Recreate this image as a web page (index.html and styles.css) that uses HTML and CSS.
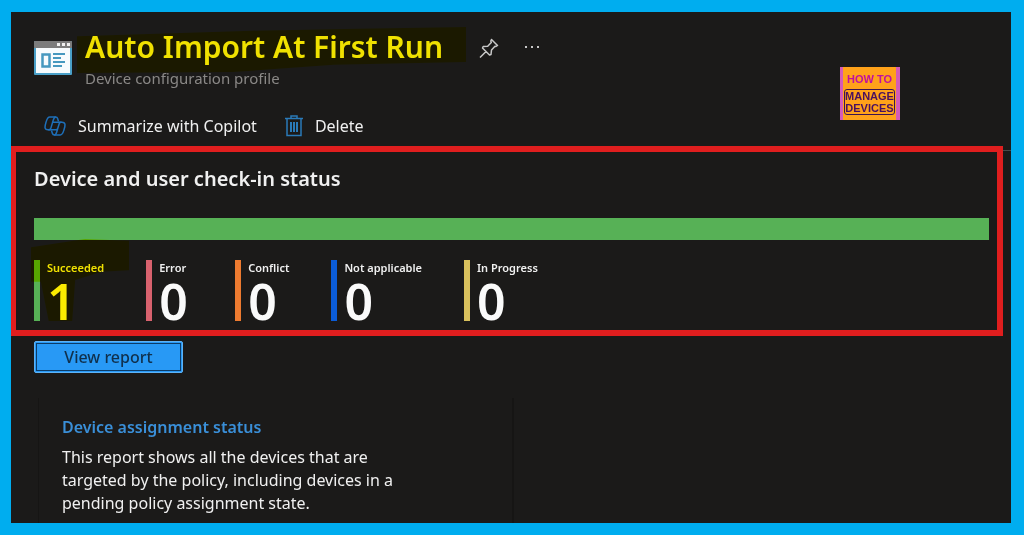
FILE: index.html
```html
<!DOCTYPE html>
<html lang="en">
<head>
  <meta charset="UTF-8">
  <meta name="viewport" content="width=device-width, initial-scale=1.0">
  <title>Auto Import At First Run</title>
  <link rel="stylesheet" href="styles.css">
</head>
<body>
  <header class="header">
    <div class="heading">
      <svg class="profile-icon" viewBox="0 0 38 34" aria-hidden="true">
        <rect width="38" height="34" rx="1" fill="#4aa0c8"/>
        <path d="M0 7V1a1 1 0 0 1 1-1h36a1 1 0 0 1 1 1v6z" fill="#7c7c7c"/>
        <path d="M2 7h34v25H2z" fill="#f7fbfd"/>
        <path d="M23 2h3v3h-3zM28 2h3v3h-3zM33 2h3v3h-3z" fill="#f0f0f0"/>
        <path d="M8.500 13.500h7v12h-7z" fill="none" stroke="#4698bf" stroke-width="2.500"/>
        <path d="M19 13h12M19 17h8M19 21h12M19 25h9" stroke="#4698bf" stroke-width="2"/>
      </svg>
      <div class="names">
        <h1>Auto Import At First Run</h1>
        <p>Device configuration profile</p>
      </div>
      <button class="icon-button" aria-label="Pin">
        <svg width="20" height="20" viewBox="0 0 20 20" fill="none" stroke="#c8c8c8" stroke-width="1.500" stroke-linejoin="round">
          <path d="M12.500 1.500l6 6-1.500 1-1-.2-3.500 3.700-.5 4.500-1.500.5-7-7 .7-1.500 4.500-.3 3.600-3.700-.5-1.500zM7 13.500l-6 6"/>
        </svg>
      </button>
      <button class="icon-button" aria-label="More">
        <svg width="16" height="20" viewBox="0 0 16 20" fill="#c8c8c8">
          <path d="M1 8h2v2H1zM7 8h2v2H7zM13 8h2v2h-2z"/>
        </svg>
      </button>
      <div class="logo">
        <span class="logo-top">HOW TO</span>
        <span class="logo-box">MANAGE<br>DEVICES</span>
      </div>
    </div>
    <nav class="commands">
      <button class="command">
        <svg width="22" height="20" viewBox="0 0 22 20" fill="none" stroke="#1e6fb8" stroke-width="1.500" stroke-linejoin="round">
          <path d="M14.500 5.500l-.8-2.800A2.300 2.300 0 0 0 11.500 1H5.800C3.600 1 2.900 3.200 2.200 5.600 1.300 8.500.8 10 1 11.500c.2 1.700 1.500 2.300 3 2.300h2.500"/>
          <path d="M7.500 14.500l.8 2.800A2.300 2.300 0 0 0 10.500 19h5.700c2.200 0 2.900-2.200 3.600-4.600.9-2.900 1.400-4.400 1.200-5.900-.2-1.700-1.500-2.300-3-2.300h-2.500"/>
          <path d="M11.800 1C10.400 1 9.700 2.600 9.200 4.300l-2.300 7.800c-.4 1.300-1.200 1.700-2.400 1.700H12c1 0 1.500-.6 1.800-1.500l1.400-4.600c.3-1 .9-1.500 2-1.500H10c-1 0-1.400-.5-1.400-.5M10.200 19c1.400 0 2.100-1.600 2.600-3.300l1-3.400"/>
        </svg>
        Summarize with Copilot
      </button>
      <button class="command">
        <svg width="18" height="22" viewBox="0 0 18 22" fill="none" stroke="#2a7ab8" stroke-width="1.500">
          <path d="M0 3.500h18M6 3V1h6v2M2 4v16.500h14V4"/>
          <path d="M6 7v10M9 7v10M12 7v10" stroke-width="2"/>
        </svg>
        Delete
      </button>
    </nav>
  </header>

  <section class="status">
    <h2>Device and user check-in status</h2>
    <div class="bar"></div>
    <div class="stats">
      <div class="stat succeeded">
        <span class="label">Succeeded</span>
        <span class="value">1</span>
      </div>
      <div class="stat error">
        <span class="label">Error</span>
        <span class="value">0</span>
      </div>
      <div class="stat conflict">
        <span class="label">Conflict</span>
        <span class="value">0</span>
      </div>
      <div class="stat not-applicable">
        <span class="label">Not applicable</span>
        <span class="value">0</span>
      </div>
      <div class="stat in-progress">
        <span class="label">In Progress</span>
        <span class="value">0</span>
      </div>
    </div>
  </section>

  <button class="view-report">View report</button>

  <article class="card">
    <a href="#">Device assignment status</a>
    <p>This report shows all the devices that are targeted by the policy, including devices in a pending policy assignment state.</p>
  </article>
</body>
</html>
```
FILE: styles.css
```css
* {
  box-sizing: border-box;
}

body {
  margin: 0;
  height: 100vh;
  overflow: hidden;
  display: flex;
  flex-direction: column;
  background: #1b1a19;
  border: 12px solid #00adef;
  border-left-width: 11px;
  border-right-width: 13px;
  color: #f0f0f0;
  font-family: "Noto Sans", "Open Sans", sans-serif;
  font-size: 16px;
}

h1, h2, p {
  margin: 0;
}

button {
  font: inherit;
  color: inherit;
  background: none;
  border: none;
  padding: 0;
  cursor: pointer;
}

svg {
  display: block;
  flex: none;
}

.header {
  flex: none;
  border-bottom: 1px solid #4a4a4a;
}

.heading {
  display: flex;
  align-items: flex-start;
  height: 96px;
  padding: 15px 111px 0 23px;
}

.profile-icon {
  width: 38px;
  height: 34px;
  margin-top: 14px;
}

.names {
  position: relative;
  margin: 0 36px 0 13px;
  white-space: nowrap;
}

/* marker stroke over the title */
.names::after {
  content: "";
  position: absolute;
  inset: 0 -23px 16px -8px;
  background: #fff000;
  mix-blend-mode: multiply;
  clip-path: polygon(0 20%, 45% 8%, 72% 4%, 100% 0, 100% 76%, 66% 82%, 40% 98%, 0 100%);
}

.names h1 {
  font-size: 30px;
  line-height: 40px;
  font-weight: 600;
}

.names p {
  font-size: 15px;
  line-height: 22px;
  color: #8a8886;
}

.icon-button {
  margin: 11px 25px 0 0;
}

.logo {
  width: 60px;
  height: 53px;
  margin: 40px 0 0 auto;
  padding: 3px 0 0;
  background: #ffa21a;
  border: solid #d45bb8;
  border-width: 0 4px 0 3px;
  display: flex;
  flex-direction: column;
  align-items: center;
  font-family: "Liberation Sans Narrow", "Liberation Sans", sans-serif;
  font-weight: bold;
}

.logo-top {
  font-size: 11px;
  line-height: 18px;
  color: #c010a0;
  white-space: nowrap;
}

.logo-box {
  border: 1px solid #3c1450;
  border-radius: 3px;
  font-family: "Liberation Sans", sans-serif;
  font-size: 11px;
  line-height: 12px;
  color: #4a1060;
  text-align: center;
  margin-top: 1px;
}

.commands {
  display: flex;
  gap: 28px;
  padding: 6px 0 0 33px;
  height: 42px;
}

.command {
  display: flex;
  align-items: center;
  gap: 12px;
  height: 24px;
}

.status {
  flex: none;
  margin: -5px 8px 0 0;
  padding: 14px 8px 9px 18px;
  border: 6px solid #e01e1e;
  border-left-width: 5px;
}

.status h2 {
  font-size: 20px;
  line-height: 26px;
  font-weight: 600;
}

.bar {
  height: 22px;
  margin-top: 26px;
  background: #57b156;
}

.stats {
  display: flex;
  gap: 42px;
  margin-top: 20px;
}

.stat {
  position: relative;
  display: flex;
  flex-direction: column;
  height: 61px;
  min-width: 47px;
  padding-left: 7px;
  border-left: 6px solid;
}

.label {
  font-size: 11px;
  line-height: 16px;
  font-weight: 600;
  color: #f0f0f0;
}

.value {
  font-size: 50px;
  line-height: 50px;
  font-weight: 600;
  color: #fafafa;
}

.succeeded {
  border-color: #57b156;
}

/* marker stroke over the succeeded count */
.succeeded::after {
  content: "";
  position: absolute;
  inset: -21px -25px 0 -9px;
  background: #fff000;
  mix-blend-mode: multiply;
  clip-path: polygon(0 10%, 55% 0, 100% 2%, 100% 38%, 72% 40%, 45% 50%, 42% 100%, 18% 100%, 10% 52%, 0 52%);
}

.error {
  border-color: #d9626e;
}

.conflict {
  border-color: #ee7b30;
}

.not-applicable {
  border-color: #0b5cd8;
}

.in-progress {
  border-color: #d8c05c;
}

.view-report {
  flex: none;
  align-self: flex-start;
  width: 149px;
  height: 32px;
  margin: 5px 0 0 23px;
  background: #2899f5;
  border: 1px solid #5eb2f5;
  border-radius: 2px;
  outline: 1px solid #0c3c68;
  outline-offset: -3px;
  color: #10304c;
  font-weight: 500;
}

.card {
  flex: 1 0 auto;
  width: 476px;
  margin: 25px 0 0 27px;
  padding: 18px 96px 0 23px;
  border: solid #161514;
  border-width: 0 2px 0 1px;
}

.card a {
  display: block;
  font-weight: 600;
  line-height: 22px;
  color: #3a8fd8;
  text-decoration: none;
}

.card p {
  margin-top: 8px;
  line-height: 23px;
}
```
